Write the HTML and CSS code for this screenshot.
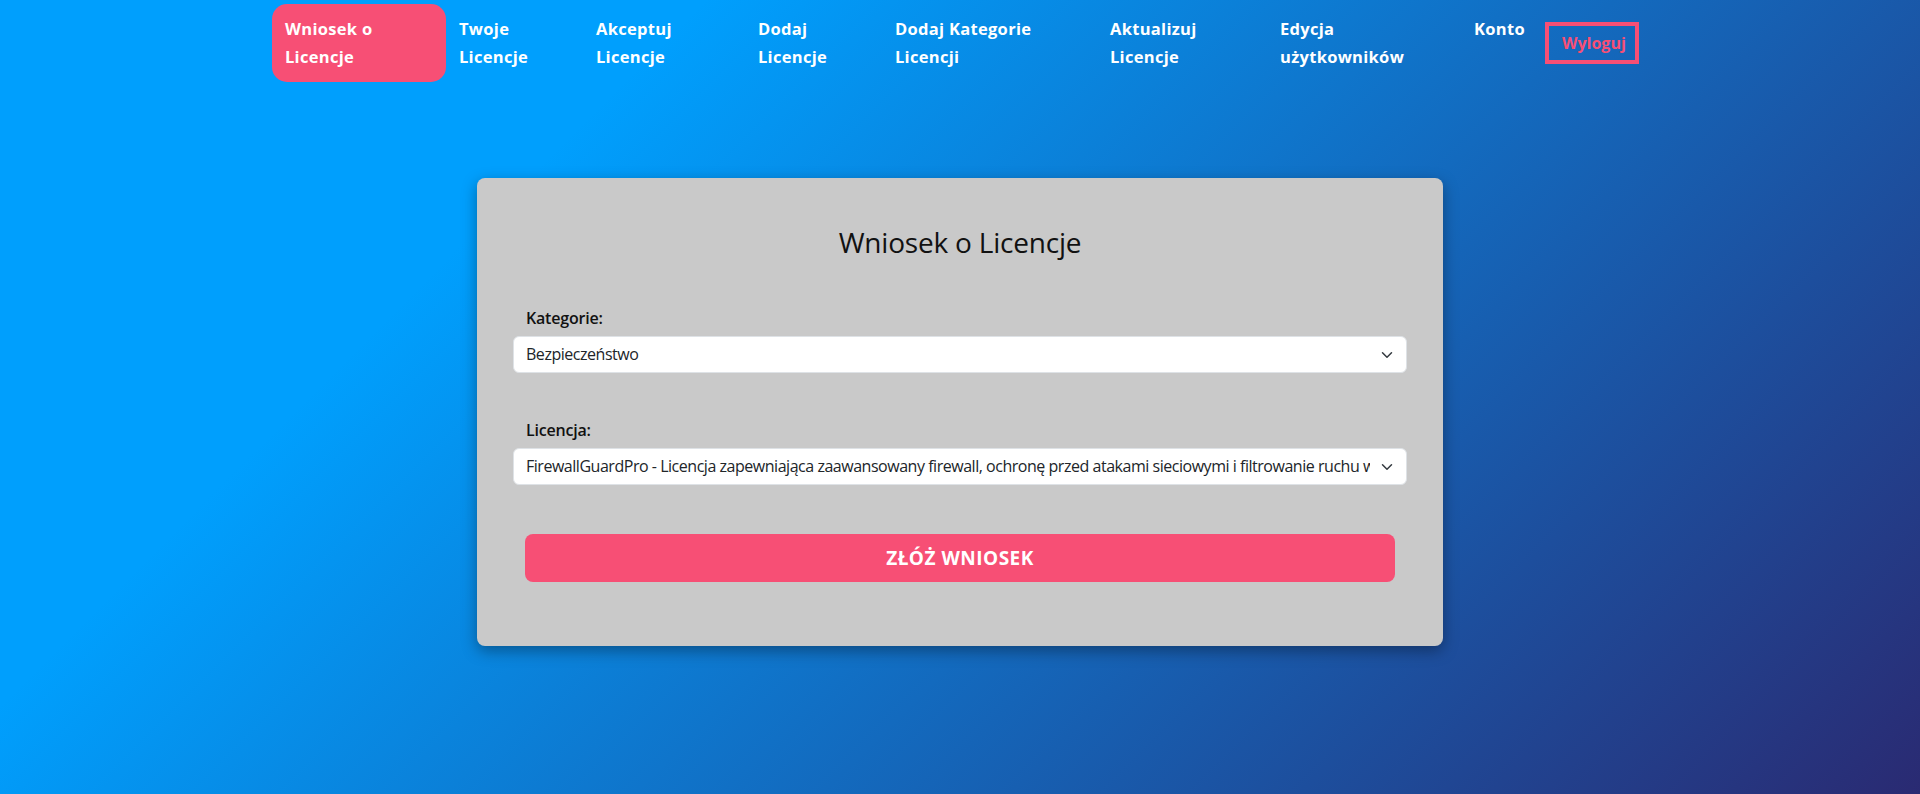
FILE: index.html
```html
<!DOCTYPE html>
<html lang="pl">
<head>
<meta charset="utf-8">
<title>Wniosek o Licencje</title>
<link rel="stylesheet" href="styles.css">
</head>
<body>
<div class="page">
  <nav class="topnav">
    <ul class="nav-list">
      <li class="nav-item w-wniosek active"><a class="nav-link">Wniosek o Licencje</a></li>
      <li class="nav-item w-twoje"><a class="nav-link">Twoje Licencje</a></li>
      <li class="nav-item w-akceptuj"><a class="nav-link">Akceptuj Licencje</a></li>
      <li class="nav-item w-dodaj"><a class="nav-link">Dodaj Licencje</a></li>
      <li class="nav-item w-kategorie"><a class="nav-link">Dodaj Kategorie Licencji</a></li>
      <li class="nav-item w-aktualizuj"><a class="nav-link">Aktualizuj Licencje</a></li>
      <li class="nav-item w-edycja"><a class="nav-link">Edycja użytkowników</a></li>
      <li class="nav-item w-konto"><a class="nav-link">Konto</a></li>
      <li class="nav-logout"><a class="logout-link">Wyloguj</a></li>
    </ul>
  </nav>
  <main class="content">
    <form class="card">
      <h2 class="card-title">Wniosek o Licencje</h2>
      <div class="field">
        <label class="field-label" for="kat">Kategorie:</label>
        <div class="select-wrap">
          <select class="field-select" id="kat">
            <option>Bezpieczeństwo</option>
          </select>
          <svg class="chevron" viewBox="0 0 16 16" width="16" height="12"><path d="M2 5l6 6 6-6" fill="none" stroke="#343a40" stroke-width="2" stroke-linecap="round" stroke-linejoin="round"/></svg>
        </div>
      </div>
      <div class="field">
        <label class="field-label" for="lic">Licencja:</label>
        <div class="select-wrap">
          <select class="field-select" id="lic">
            <option>FirewallGuardPro - Licencja zapewniająca zaawansowany firewall, ochronę przed atakami sieciowymi i filtrowanie ruchu w sieci firmowej.</option>
          </select>
          <svg class="chevron" viewBox="0 0 16 16" width="16" height="12"><path d="M2 5l6 6 6-6" fill="none" stroke="#343a40" stroke-width="2" stroke-linecap="round" stroke-linejoin="round"/></svg>
        </div>
      </div>
      <button type="button" class="submit">ZŁÓŻ WNIOSEK</button>
    </form>
  </main>
</div>
</body>
</html>
```
FILE: styles.css
```css
* { box-sizing: border-box; }
html, body { margin: 0; padding: 0; }
body {
  font-family: "Open Sans", "Noto Sans", sans-serif;
  color: #212529;
}
.page {
  min-height: 100vh;
  background-color: #2a2a72;
  background-image: linear-gradient(315deg, #2a2a72 0%, #009ffd 74%);
  overflow: hidden;
}
.nav-list {
  list-style: none;
  margin: 0;
  padding: 4px 0 0 272px;
  display: flex;
  align-items: flex-start;
}
.nav-item {
  padding: 11px 13px;
  font-size: 16.5px;
  letter-spacing: 0.3px;
  line-height: 28px;
  font-weight: 700;
  color: #fff;
  flex: none;
}
.nav-item.active {
  background: #f74f75;
  border-radius: 15px;
}
.nav-link { color: inherit; text-decoration: none; }
.w-wniosek { width: 174px; }
.w-twoje { width: 137px; }
.w-akceptuj { width: 162px; }
.w-dodaj { width: 137px; }
.w-kategorie { width: 215px; }
.w-aktualizuj { width: 170px; }
.w-edycja { width: 194px; }
.w-konto { width: 84px; }
.nav-logout {
  flex: none;
  margin-top: 18px;
  width: 94px;
  border: 4px solid #f74f75;
  padding: 5px 11px 5px 13px;
  font-size: 16px;
  line-height: 24px;
  font-weight: 700;
  color: #f74f75;
}
.logout-link { color: inherit; text-decoration: none; }

.card {
  width: 966px;
  margin: 96px auto 0;
  padding: 47px 36px 64px;
  background: #c9c9c9;
  border-radius: 8px;
  box-shadow: 0 5px 15px rgba(0, 0, 0, 0.35);
}
.card-title {
  margin: 0 0 47px;
  text-align: center;
  font-size: 28px;
  letter-spacing: -0.2px;
  line-height: 34px;
  font-weight: 400;
  color: #111;
}
.field { margin-bottom: 45px; }
.field + .field { margin-bottom: 49px; }
.field-label {
  display: block;
  font-size: 16px;
  line-height: 24px;
  font-weight: 600;
  letter-spacing: -0.2px;
  color: #111;
  margin: 0 0 6px 13px;
}
.select-wrap { position: relative; }
.field-select {
  display: block;
  width: 100%;
  height: 37px;
  appearance: none;
  -webkit-appearance: none;
  font-family: inherit;
  font-size: 16px;
  letter-spacing: -0.47px;
  line-height: 23px;
  color: #212529;
  background: #fff;
  border: 1px solid #dee2e6;
  border-radius: 6px;
  padding: 6px 36px 6px 12px;
}
.chevron {
  position: absolute;
  right: 12px;
  top: 50%;
  margin-top: -6px;
  pointer-events: none;
}
.submit {
  display: block;
  width: calc(100% - 24px);
  margin: 0 12px;
  height: 48px;
  border: none;
  border-radius: 8px;
  background: #f74f75;
  color: #fff;
  font-family: inherit;
  font-size: 19px;
  font-weight: 700;
  letter-spacing: 0.5px;
}
```
